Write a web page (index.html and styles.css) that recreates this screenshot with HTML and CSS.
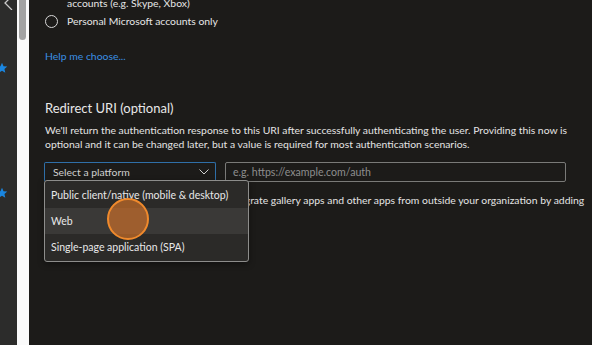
FILE: index.html
```html
<html>
  <head>
    <title>Register an application</title>
    <link rel="stylesheet" href="styles.css">
  </head>
  <body>
    <div class="app">
      <div class="rail">
        <svg class="railBack" width="14" height="10" viewBox="0 0 14 10"><path d="M12 -4 L5 3 L12 10" fill="none" stroke="#c8c8c8" stroke-width="1.3"/></svg>
        <svg class="railStar starOne" width="12" height="12" viewBox="0 0 24 24"><path d="M12 1.5l3.1 6.9 7.4.7-5.6 5 1.7 7.4L12 17.6l-6.6 3.9 1.7-7.4-5.6-5 7.4-.7z" fill="#1a86e0"/></svg>
        <svg class="railStar starTwo" width="12" height="12" viewBox="0 0 24 24"><path d="M12 1.5l3.1 6.9 7.4.7-5.6 5 1.7 7.4L12 17.6l-6.6 3.9 1.7-7.4-5.6-5 7.4-.7z" fill="#1a86e0"/></svg>
      </div>
      <div class="scrollTrack"><div class="scrollThumb"></div></div>
      <div class="main">
        <div class="radioRow cut">
          <span class="radioSpacer"></span>
          <span>accounts (e.g. Skype, Xbox)</span>
        </div>
        <div class="radioRow">
          <span class="radio"></span>
          <span>Personal Microsoft accounts only</span>
        </div>
        <a class="helpLink">Help me choose...</a>

        <h2 class="sectionTitle">Redirect URI (optional)</h2>
        <p class="desc">We'll return the authentication response to this URI after successfully authenticating the user. Providing this now is<br>optional and it can be changed later, but a value is required for most authentication scenarios.</p>

        <div class="uriRow">
          <div class="selectWrap">
            <div class="select">
              <span>Select a platform</span>
              <svg width="10" height="6" viewBox="0 0 10 6"><path d="M0.5 0.5 L5 5 L9.5 0.5" fill="none" stroke="#d0d0d0" stroke-width="1"/></svg>
            </div>
            <div class="menu">
              <div class="menuItem">Public client/native (mobile &amp; desktop)</div>
              <div class="menuItem active">Web</div>
              <div class="menuItem">Single-page application (SPA)</div>
              <div class="clickDot"></div>
            </div>
          </div>
          <div class="uriInput">e.g. https://example.com/auth</div>
        </div>
        <p class="desc behind">Register an app you're working on here. Integrate gallery apps and other apps from outside your organization by adding</p>
      </div>
    </div>
  </body>
</html>
```

FILE: styles.css
```css
body {
  margin: 0;
  background: #1c1b19;
  font-family: "Lato", "Noto Sans", sans-serif;
  color: #e6e6e6;
  overflow: hidden;
}

.app {
  display: flex;
  height: 345px;
}

.rail {
  position: relative;
  width: 17px;
  background: #2c2c2b;
  flex-shrink: 0;
}
.railBack {
  position: absolute;
  top: 0;
  left: 0;
}
.railStar {
  position: absolute;
  left: -4px;
}
.starOne { top: 62px; }
.starTwo { top: 187px; }

.scrollTrack {
  width: 12px;
  background: #fafafa;
  flex-shrink: 0;
}
.scrollThumb {
  margin-left: 2px;
  width: 7px;
  height: 40px;
  background: #a3a3a3;
  border-radius: 0 0 4px 4px;
}

.main {
  flex: 1;
  padding-left: 16px;
  overflow: hidden;
}

.radioRow {
  display: flex;
  align-items: center;
  gap: 9px;
  font-size: 10.4px;
  height: 16px;
}
.radioRow.cut {
  margin-top: -5px;
  margin-bottom: 2px;
}
.radioSpacer {
  width: 13px;
}
.radio {
  width: 11px;
  height: 11px;
  border: 1px solid #d8d8d8;
  border-radius: 50%;
}

.helpLink {
  display: block;
  margin-top: 21px;
  font-size: 10.4px;
  color: #3a8fe4;
}

.sectionTitle {
  margin: 38px 0 0;
  font-size: 13px;
  font-weight: normal;
  color: #e8e8e8;
}

.desc {
  margin: 7px 0 0;
  font-size: 10.4px;
  line-height: 14px;
  color: #e4e4e4;
  white-space: nowrap;
}

.uriRow {
  display: flex;
  gap: 9px;
  margin-top: 11px;
  margin-left: -1px;
}

.selectWrap {
  position: relative;
}
.select {
  box-sizing: border-box;
  width: 172px;
  height: 20px;
  border: 1px solid #2f6fa8;
  border-bottom-color: #4a4a48;
  border-radius: 2px;
  display: flex;
  align-items: center;
  justify-content: space-between;
  padding: 0 6px 0 8px;
  font-size: 10.4px;
  color: #cfcfcf;
}

.uriInput {
  box-sizing: border-box;
  width: 341px;
  height: 20px;
  border: 1px solid #7a7a78;
  border-radius: 2px;
  padding-left: 7px;
  display: flex;
  align-items: center;
  font-size: 10.6px;
  color: #8e8e8e;
}

.menu {
  position: absolute;
  top: 18px;
  left: 0;
  width: 205px;
  box-sizing: border-box;
  background: #2b2a28;
  border: 1px solid #8d8d8b;
  border-radius: 3px;
  padding: 1px 0;
  z-index: 2;
  box-shadow: 0 2px 6px rgba(0, 0, 0, 0.4);
}
.menuItem {
  height: 26px;
  display: flex;
  align-items: center;
  padding-left: 6px;
  font-size: 10.5px;
  color: #e8e8e8;
  white-space: nowrap;
}
.menuItem.active {
  background: #3a3937;
}

.clickDot {
  position: absolute;
  left: 62px;
  top: 17px;
  width: 38px;
  height: 38px;
  border-radius: 50%;
  border: 2px solid #f08a2c;
  background: rgba(220, 118, 40, 0.62);
}

.behind {
  margin-top: 11px;
}
```
